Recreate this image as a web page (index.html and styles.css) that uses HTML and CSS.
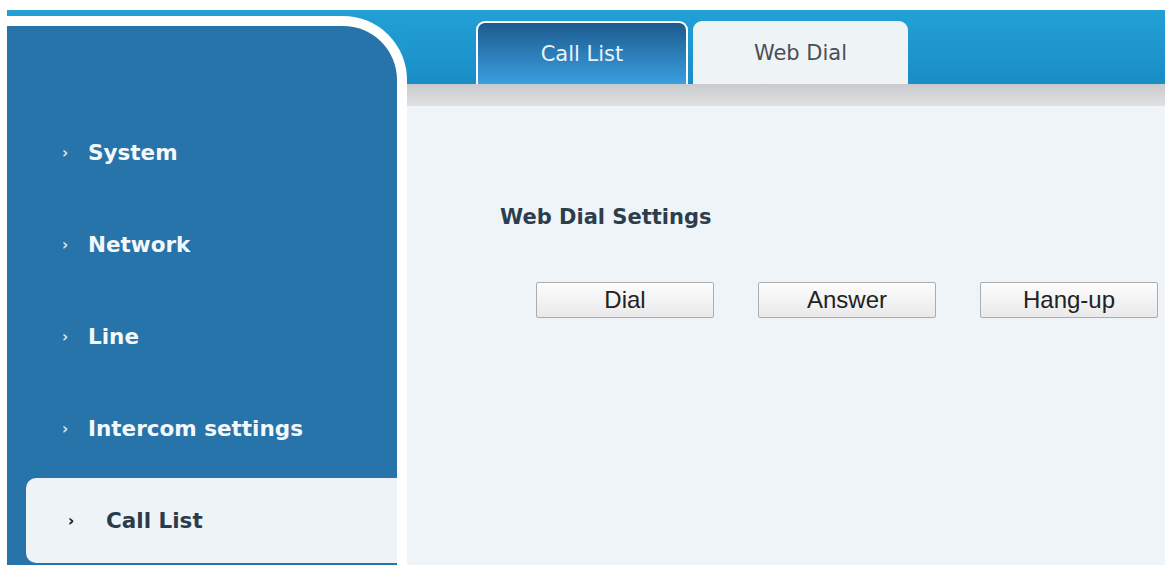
FILE: index.html
```html
<!DOCTYPE html>
<html lang="en">
<head>
<meta charset="utf-8">
<title>Web Dial</title>
<link rel="stylesheet" href="styles.css">
</head>
<body>
<div class="page">
  <aside class="side-col">
    <nav class="sidebar">
      <a class="nav-item"><span class="chev">&rsaquo;</span>System</a>
      <a class="nav-item"><span class="chev">&rsaquo;</span>Network</a>
      <a class="nav-item"><span class="chev">&rsaquo;</span>Line</a>
      <a class="nav-item"><span class="chev">&rsaquo;</span>Intercom settings</a>
      <a class="nav-item active"><span class="chev">&rsaquo;</span>Call List</a>
    </nav>
  </aside>
  <main class="main-col">
    <div class="tabbar">
      <div class="tab active">Call List</div>
      <div class="tab">Web Dial</div>
    </div>
    <div class="tab-shadow"></div>
    <section class="content">
      <h2 class="section-title">Web Dial Settings</h2>
      <div class="actions">
        <button class="btn" type="button">Dial</button>
        <button class="btn" type="button">Answer</button>
        <button class="btn" type="button">Hang-up</button>
      </div>
    </section>
  </main>
</div>
</body>
</html>
```

FILE: styles.css
```css
html, body {
  margin: 0;
  padding: 0;
  background: #ffffff;
}

.page {
  display: grid;
  grid-template-columns: 400px 1fr;
  height: 555px;
  padding: 10px 0 0 7px;
  overflow: hidden;
  font-family: "DejaVu Sans", Verdana, sans-serif;
}

/* ---- left navigation ---- */
.side-col {
  padding-top: 6px;
  background: linear-gradient(to bottom, #21a0d5 0, #1b8fc9 74px, transparent 74px);
  display: flex;
  flex-direction: column;
}

.sidebar {
  flex: 1;
  background: #2674a9;
  border-top: 10px solid #ffffff;
  border-right: 10px solid #ffffff;
  border-top-right-radius: 64px;
  padding-top: 84px;
  display: flex;
  flex-direction: column;
  gap: 7px;
}

.nav-item {
  height: 85px;
  display: flex;
  align-items: center;
  padding-left: 55px;
  color: #f4f8fb;
  font-weight: bold;
  font-size: 21.5px;
  text-decoration: none;
  flex-shrink: 0;
}

.chev {
  display: inline-block;
  width: 26px;
  font-size: 15px;
  font-weight: bold;
  color: #d6e4ef;
}

.nav-item.active {
  margin-left: 19px;
  padding-left: 42px;
  background: #eef3f8;
  border-radius: 10px 0 0 10px;
  color: #2b3b4a;
}

.nav-item.active .chev {
  width: 38px;
  color: #111111;
}

/* ---- right side ---- */
.main-col {
  display: flex;
  flex-direction: column;
  min-width: 0;
}

.tabbar {
  height: 74px;
  box-sizing: border-box;
  padding: 11px 0 0 69px;
  background: linear-gradient(to bottom, #22a1d6, #1a8cc6);
  display: flex;
  align-items: flex-end;
  gap: 5px;
}

.tab {
  width: 215px;
  height: 63px;
  box-sizing: border-box;
  border-radius: 9px 9px 0 0;
  background: #eef3f6;
  color: #4a4f56;
  font-size: 21px;
  display: flex;
  align-items: center;
  justify-content: center;
}

.tab.active {
  width: 212px;
  border: 2px solid #ffffff;
  border-bottom: none;
  background: linear-gradient(to bottom, #1d5a8e, #3a9fe0);
  color: #e9f3fb;
}

.tab-shadow {
  height: 22px;
  background: linear-gradient(to bottom, #c8cacc, #dfe1e3);
}

.content {
  flex: 1;
  background: #eef4f8;
  padding: 99px 0 0 93px;
}

.section-title {
  margin: 0;
  font-size: 21px;
  line-height: 24px;
  font-weight: bold;
  color: #2c3d4b;
}

.actions {
  display: flex;
  gap: 44px;
  margin: 53px 0 0 36px;
}

.btn {
  width: 178px;
  height: 36px;
  border: 1px solid #a9adb0;
  border-radius: 2px;
  background: linear-gradient(to bottom, #fdfdfd, #e9e9e9);
  font-family: "Liberation Sans", Arial, sans-serif;
  font-size: 24px;
  color: #222222;
  padding: 0;
}
```
